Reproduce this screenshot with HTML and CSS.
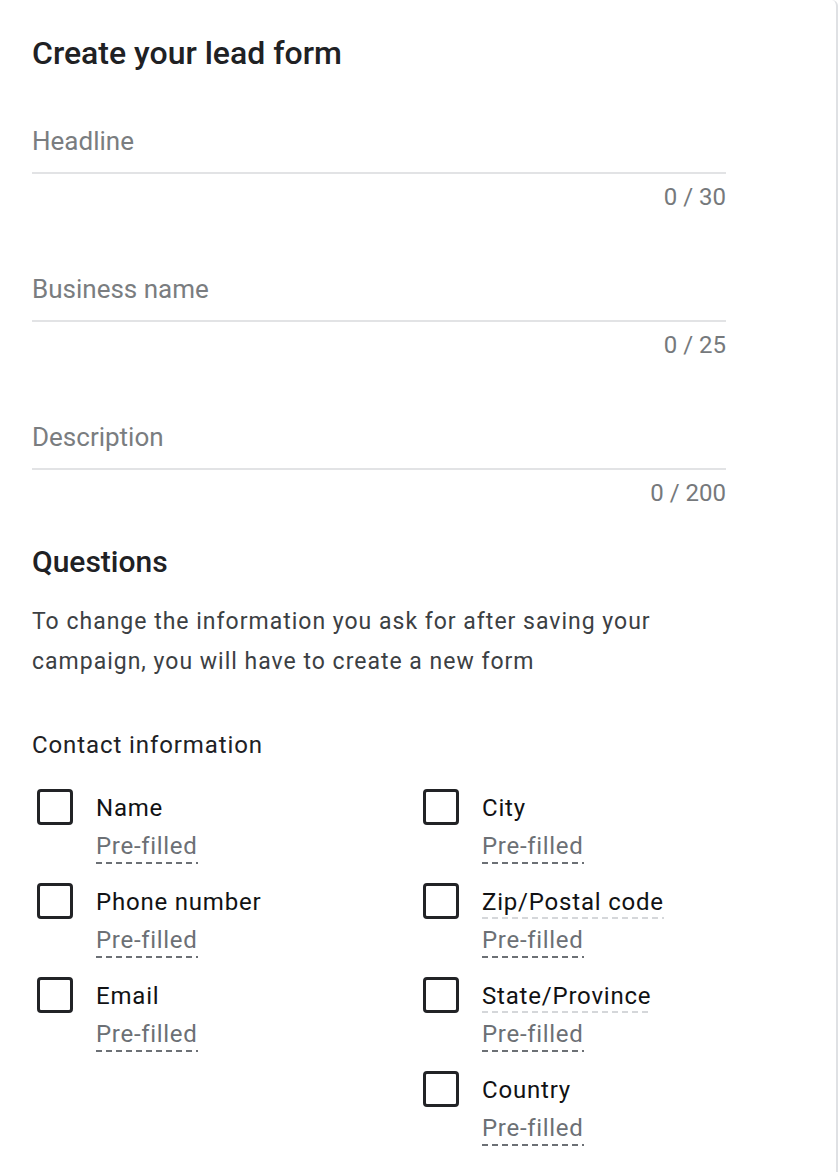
FILE: index.html
```html
<!DOCTYPE html>
<html lang="en">
<head>
<meta charset="utf-8">
<title>Create your lead form</title>
<link rel="stylesheet" href="styles.css">
</head>
<body>
<div class="card">
  <h1 class="title">Create your lead form</h1>

  <div class="fields">
    <div class="field">
      <div class="input"><span class="placeholder">Headline</span></div>
      <div class="counter">0 / 30</div>
    </div>
    <div class="field">
      <div class="input"><span class="placeholder">Business name</span></div>
      <div class="counter">0 / 25</div>
    </div>
    <div class="field">
      <div class="input"><span class="placeholder">Description</span></div>
      <div class="counter">0 / 200</div>
    </div>
  </div>

  <h2 class="section">Questions</h2>
  <p class="note">To change the information you ask for after saving your campaign, you will have to create a new form</p>

  <h3 class="group">Contact information</h3>

  <div class="options">
    <div class="col">
      <div class="option">
        <span class="box"></span>
        <div class="text">
          <div class="label">Name</div>
          <div class="sub"><span class="prefill">Pre-filled</span></div>
        </div>
      </div>
      <div class="option">
        <span class="box"></span>
        <div class="text">
          <div class="label">Phone number</div>
          <div class="sub"><span class="prefill">Pre-filled</span></div>
        </div>
      </div>
      <div class="option">
        <span class="box"></span>
        <div class="text">
          <div class="label">Email</div>
          <div class="sub"><span class="prefill">Pre-filled</span></div>
        </div>
      </div>
    </div>
    <div class="col">
      <div class="option">
        <span class="box"></span>
        <div class="text">
          <div class="label">City</div>
          <div class="sub"><span class="prefill">Pre-filled</span></div>
        </div>
      </div>
      <div class="option">
        <span class="box"></span>
        <div class="text">
          <div class="label"><span class="hint">Zip/Postal code</span></div>
          <div class="sub"><span class="prefill">Pre-filled</span></div>
        </div>
      </div>
      <div class="option">
        <span class="box"></span>
        <div class="text">
          <div class="label"><span class="hint">State/Province</span></div>
          <div class="sub"><span class="prefill">Pre-filled</span></div>
        </div>
      </div>
      <div class="option">
        <span class="box"></span>
        <div class="text">
          <div class="label">Country</div>
          <div class="sub"><span class="prefill">Pre-filled</span></div>
        </div>
      </div>
    </div>
  </div>
</div>
</body>
</html>
```

FILE: styles.css
```css
html, body {
  margin: 0;
  padding: 0;
  background: #ffffff;
}

body {
  font-family: Roboto, "Noto Sans", "Liberation Sans", sans-serif;
  color: #202124;
}

.card {
  box-sizing: border-box;
  width: 838px;
  min-height: 1172px;
  padding: 33px 32px 0 32px;
  border-right: 2px solid #dfe1e4;
  border-top-right-radius: 6px;
}

.title {
  margin: 0;
  font-size: 32px;
  line-height: 40px;
  font-weight: 500;
  color: #202124;
}

.fields {
  width: 694px;
  margin-top: 52px;
  display: flex;
  flex-direction: column;
  gap: 62px;
}

.input {
  font-size: 26px;
  line-height: 32px;
  padding-bottom: 15px;
  border-bottom: 2px solid #e2e3e5;
}

.placeholder {
  color: #7a7d80;
}

.counter {
  margin-top: 9px;
  text-align: right;
  font-size: 24px;
  line-height: 28px;
  color: #76797c;
}

.section {
  margin: 37px 0 0 0;
  font-size: 30px;
  line-height: 36px;
  font-weight: 500;
  color: #202124;
}

.note {
  margin: 22px 0 0 0;
  width: 694px;
  font-size: 23px;
  line-height: 40px;
  letter-spacing: 1px;
  color: #3c4043;
}

.group {
  margin: 47px 0 0 0;
  font-size: 24px;
  line-height: 32px;
  letter-spacing: 0.9px;
  font-weight: 400;
  color: #202124;
}

.options {
  margin-top: 28px;
  display: grid;
  grid-template-columns: 386px 1fr;
}

.col {
  display: flex;
  flex-direction: column;
  gap: 18px;
}

.option {
  display: flex;
  align-items: flex-start;
}

.box {
  box-sizing: border-box;
  flex: none;
  width: 36px;
  height: 36px;
  margin-left: 5px;
  margin-right: 23px;
  border: 3.5px solid #222326;
  border-radius: 4px;
}

.text {
  font-size: 24px;
  line-height: 38px;
  letter-spacing: 0.8px;
}

.label {
  color: #111214;
}

.hint {
  padding-bottom: 3px;
  background: linear-gradient(to right, #d5d7da 60%, transparent 60%) left bottom / 10px 2px repeat-x;
}

.sub {
  color: #6c7075;
  letter-spacing: 0.7px;
}

.prefill {
  padding-bottom: 4px;
  background: linear-gradient(to right, #6c7075 60%, transparent 60%) left bottom / 10px 2px repeat-x;
}
```
